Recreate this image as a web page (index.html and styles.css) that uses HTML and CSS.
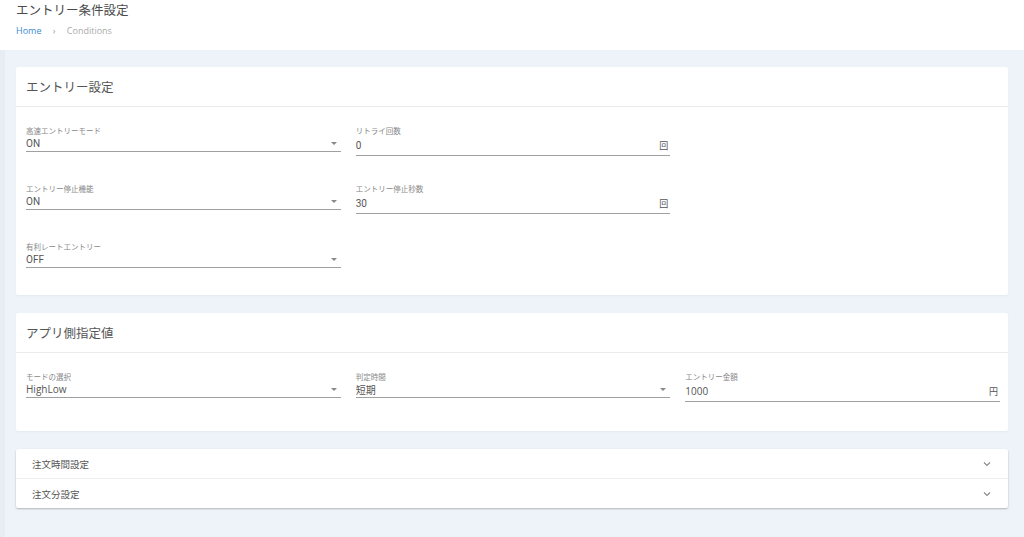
FILE: index.html
```html
<!DOCTYPE html>
<html lang="ja">
<head>
    <meta charset="UTF-8">
    <meta name="viewport" content="width=device-width, initial-scale=1.0">
    <title>エントリー条件設定</title>
    <link rel="stylesheet" href="styles.css">
</head>
<body>

<div class="page">
    <div class="page-header">
        <h1>エントリー条件設定</h1>
        <div class="breadcrumb">
            <a href="#">Home</a>
            <span class="sep">&rsaquo;</span>
            <span class="current">Conditions</span>
        </div>
    </div>

    <div class="content">
        <div class="card">
            <div class="card-title">エントリー設定</div>
            <div class="card-body">
                <div class="field">
                    <label>高速エントリーモード</label>
                    <div class="control select"><span>ON</span><i class="caret"></i></div>
                </div>
                <div class="field">
                    <label>リトライ回数</label>
                    <div class="control input"><span>0</span><em class="suffix">回</em></div>
                </div>
                <div class="field"></div>

                <div class="field">
                    <label>エントリー停止機能</label>
                    <div class="control select"><span>ON</span><i class="caret"></i></div>
                </div>
                <div class="field">
                    <label>エントリー停止秒数</label>
                    <div class="control input"><span>30</span><em class="suffix">回</em></div>
                </div>
                <div class="field"></div>

                <div class="field">
                    <label>有利レートエントリー</label>
                    <div class="control select"><span>OFF</span><i class="caret"></i></div>
                </div>
            </div>
        </div>

        <div class="card">
            <div class="card-title">アプリ側指定値</div>
            <div class="card-body single">
                <div class="field">
                    <label>モードの選択</label>
                    <div class="control select alt"><span>HighLow</span><i class="caret"></i></div>
                </div>
                <div class="field">
                    <label>判定時間</label>
                    <div class="control select"><span>短期</span><i class="caret"></i></div>
                </div>
                <div class="field">
                    <label>エントリー金額</label>
                    <div class="control input alt"><span>1000</span><em class="suffix">円</em></div>
                </div>
            </div>
        </div>

        <div class="accordion">
            <div class="acc-row">
                <span>注文時間設定</span>
                <svg class="chevron" width="10" height="10" viewBox="0 0 10 10"><path d="M2 3.5 L5 6.5 L8 3.5" fill="none" stroke="#888" stroke-width="1.1"/></svg>
            </div>
            <div class="acc-row">
                <span>注文分設定</span>
                <svg class="chevron" width="10" height="10" viewBox="0 0 10 10"><path d="M2 3.5 L5 6.5 L8 3.5" fill="none" stroke="#888" stroke-width="1.1"/></svg>
            </div>
        </div>
    </div>
</div>

</body>
</html>
```

FILE: styles.css
```css
html, body {
    margin: 0;
    padding: 0;
}

body {
    font-family: Roboto, "Noto Sans CJK JP", sans-serif;
    background: #edf3f8;
    color: #555;
    height: 537px;
    overflow: hidden;
}

.page {
    min-height: 537px;
    border-left: 5px solid #e7edf2;
}

.page-header {
    background: #fff;
    height: 50px;
    margin-left: -5px;
    padding: 1px 0 0 16px;
    box-sizing: border-box;
}

.page-header h1 {
    margin: 0;
    font-size: 12.5px;
    font-weight: 400;
    color: #4a4a4a;
    line-height: 18px;
    font-family: "Noto Sans CJK JP", sans-serif;
}

.breadcrumb {
    margin-top: 5px;
    font-family: "Open Sans", sans-serif;
    font-size: 9px;
    line-height: 14px;
}

.breadcrumb a {
    color: #3b8bd0;
    text-decoration: none;
}

.breadcrumb .sep {
    color: #999;
    margin: 0 9px;
}

.breadcrumb .current {
    color: #aaa;
}

.content {
    padding: 17px 16px 0 11px;
}

.card {
    background: #fff;
    border-radius: 2px;
    box-shadow: 0 1px 2px rgba(0, 0, 0, 0.04);
    margin-bottom: 18px;
}

.card-title {
    height: 39px;
    line-height: 39px;
    padding-left: 10px;
    font-size: 12.5px;
    color: #555;
    font-family: "Noto Sans CJK JP", sans-serif;
    border-bottom: 1px solid #ececec;
}

.card-body {
    display: grid;
    grid-template-columns: repeat(3, 1fr);
    column-gap: 15px;
    row-gap: 28px;
    padding: 19px 8px 27px 10px;
}

.card-body.single {
    padding-bottom: 29px;
}

.field {
    min-height: 23px;
}

.field label {
    display: block;
    font-size: 7.5px;
    color: #888;
    line-height: 10px;
    font-family: "Noto Sans CJK JP", sans-serif;
}

.control {
    display: flex;
    align-items: center;
    justify-content: space-between;
    font-size: 10px;
    color: #555;
    border-bottom: 1px solid #a0a0a0;
}

.control.select {
    height: 14px;
    padding-bottom: 1px;
}

.control.input {
    height: 18px;
    padding-bottom: 1px;
}

.control.alt {
    font-family: "Open Sans", "Noto Sans CJK JP", sans-serif;
}

.caret {
    width: 0;
    height: 0;
    border-left: 3px solid transparent;
    border-right: 3px solid transparent;
    border-top: 3px solid #888;
    margin-right: 4px;
}

.suffix {
    font-style: normal;
    font-size: 9px;
    color: #555;
    margin-right: 2px;
    font-family: "Noto Sans CJK JP", sans-serif;
}

.accordion {
    background: #fff;
    border-radius: 2px;
    box-shadow: 0 1px 2px rgba(0, 0, 0, 0.25);
}

.acc-row {
    display: flex;
    align-items: center;
    justify-content: space-between;
    height: 29px;
    padding: 0 16px;
    font-size: 9.5px;
    color: #555;
    font-family: "Noto Sans CJK JP", sans-serif;
}

.acc-row + .acc-row {
    border-top: 1px solid #eee;
}
```
